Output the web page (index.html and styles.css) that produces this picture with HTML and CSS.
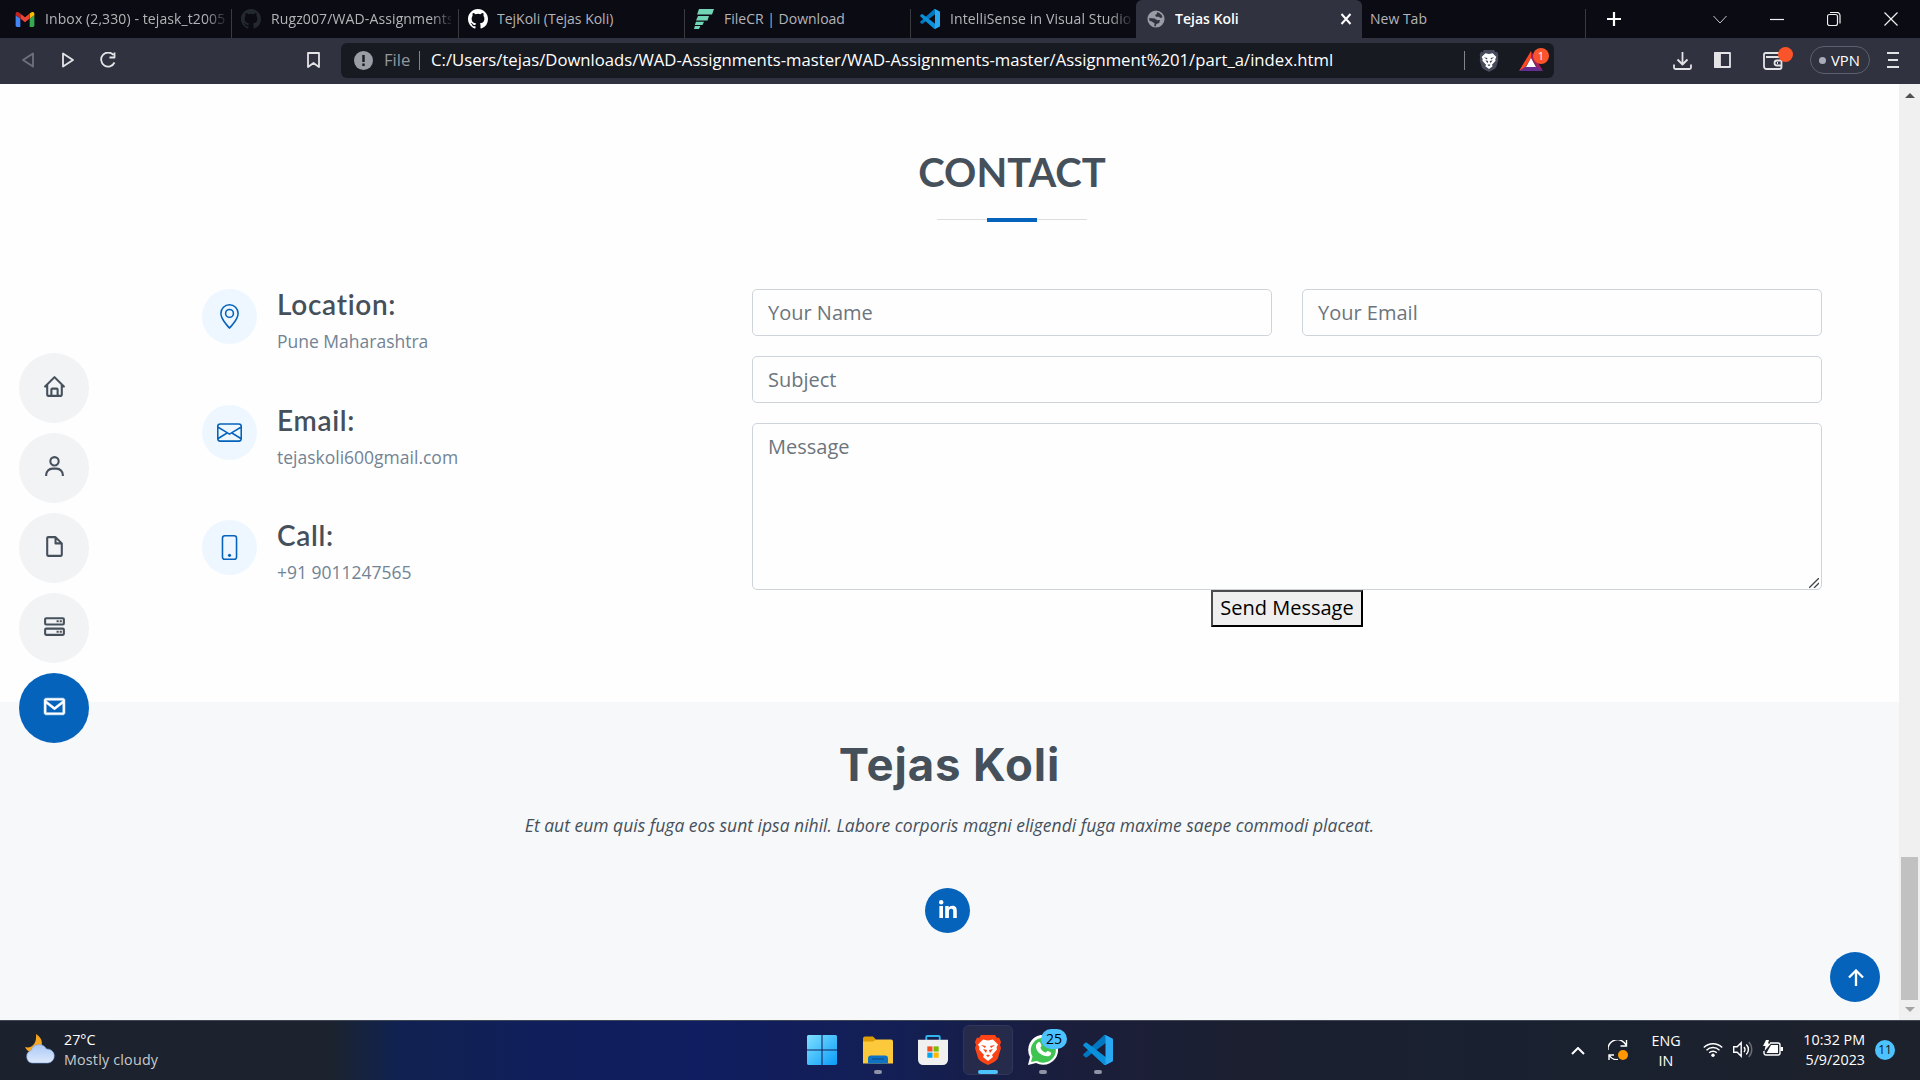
FILE: index.html
```html
<!DOCTYPE html>
<html lang="en">
<head>
<meta charset="utf-8">
<title>Tejas Koli</title>
<link rel="stylesheet" href="styles.css">
</head>
<body>
<svg class="defs" width="0" height="0">
  <symbol id="github" viewBox="0 0 16 16"><path d="M8 0C3.58 0 0 3.58 0 8c0 3.54 2.29 6.53 5.47 7.59.4.07.55-.17.55-.38 0-.19-.01-.82-.01-1.49-2.01.37-2.53-.49-2.69-.94-.09-.23-.48-.94-.82-1.13-.28-.15-.68-.52-.01-.53.63-.01 1.08.58 1.23.82.72 1.21 1.87.87 2.33.66.07-.52.28-.87.51-1.07-1.78-.2-3.64-.89-3.64-3.95 0-.87.31-1.59.82-2.15-.08-.2-.36-1.02.08-2.12 0 0 .67-.21 2.2.82a7.6 7.6 0 0 1 4 0c1.53-1.04 2.2-.82 2.2-.82.44 1.1.16 1.92.08 2.12.51.56.82 1.27.82 2.15 0 3.07-1.87 3.75-3.65 3.95.29.25.54.73.54 1.48 0 1.07-.01 1.93-.01 2.2 0 .21.15.46.55.38A8 8 0 0 0 16 8c0-4.42-3.58-8-8-8z"/></symbol>
  <symbol id="vscode" viewBox="0 0 100 100"><path fill="#0078c1" d="M96 11 76 1c-2-1-5-1-7 1L2 63c-2 2-2 4 0 6l6 5c1 1 3 1 5 0L92 14c3-2 8 0 8 3 0-3-1-5-4-6z"/><path fill="#0a91dc" d="M96 89 76 99c-2 1-5 1-7-1L2 37c-2-2-2-4 0-6l6-5c1-1 3-1 5 0l79 60c3 2 8 0 8-3 0 3-1 5-4 6z"/><path fill="#29a9f2" d="M76 99c-2 1-5 1-7-1 3 2 6 1 6-3V5c0-4-3-5-6-3 2-2 5-2 7-1l20 10c3 1 4 3 4 6v66c0 3-1 5-4 6z"/></symbol>
  <symbol id="lion" viewBox="0 0 26 30"><path d="M6 0h14l2 3 2-.5L26 7l-1 3 1 3-3 10c-1 3-6 5-10 7-4-2-9-4-10-7L0 13l1-3-1-3 2-4.500 2 .5z"/><path fill="#fff" fill-rule="evenodd" d="m8 4.500 5 1 5-1 5 5-1.500 3 .5 2-5 5.500 1 2-5 4-5-4 1-2-5-5.500.5-2L3 9.500zM6 10l4 3 1-2zm14 0-4 3-1-2zM8 14l3 4 1-3zm10 0-3 4-1-3zm-7 6.500 2 1.500 2-1.500-2-1z"/></symbol>
</svg>

<header class="browser">
  <div class="tabs">
    <div class="tab"><svg class="fav" viewBox="0 0 20 16"><path fill="#4285f4" d="M1.500 16H5V7L0 3.500v11A1.500 1.500 0 0 0 1.500 16z"/><path fill="#34a853" d="M15 16h3.500a1.500 1.500 0 0 0 1.500-1.500v-11L15 7z"/><path fill="#fbbc04" d="M15 1.500V7l5-3.500V2c0-2-2-2.600-3.500-1.500z"/><path fill="#ea4335" d="M5 7V1.500l5 4 5-4V7l-5 4z"/><path fill="#c5221f" d="M0 2v1.500L5 7V1.500L3.500.5C2-.6 0 0 0 2z"/></svg><span class="t1">Inbox (2,330) - tejask_t2005</span></div>
    <div class="tab"><svg class="fav dim"><use href="#github"/></svg><span class="t2">Rugz007/WAD-Assignments</span></div>
    <div class="tab"><svg class="fav white"><use href="#github"/></svg><span class="t3">TejKoli (Tejas Koli)</span></div>
    <div class="tab"><svg class="fav" viewBox="0 0 20 20"><g fill="#72d5b5"><path d="M5 0h15l-2 5.500H3z"/><path d="M4 7h11l-1.500 4.500H2z"/><path d="M2 12.800h8L8.500 16H.8z"/><path d="M.8 17h5.500L5 20H0z"/></g></svg><span class="t4">FileCR | Download</span></div>
    <div class="tab"><svg class="fav"><use href="#vscode"/></svg><span class="t5">IntelliSense in Visual Studio</span></div>
    <div class="tab active"><svg class="fav globe" viewBox="0 0 20 20"><circle cx="10" cy="10" r="9.500" fill="#9a9ca5"/><path fill="#30323f" d="M11 2.500c3 .5 5.500 2.500 6.300 5.500l-2.300 1-2-1.500h-3l-1-2 2-1zM2.500 9l6 .5 3 2 3-.5-1 3.500-3 1-1 2.700-1.500-.3.500-3-3-2L2.700 12z"/></svg><span class="t6">Tejas Koli</span><svg class="close" viewBox="0 0 12 12"><path d="m1.500 1 9 10m0-10-9 10" stroke="#fff" stroke-width="2"/></svg></div>
    <div class="tab newtab"><span class="t7">New Tab</span></div>
    <svg class="plus" viewBox="0 0 16 16"><path d="M8 1v14M1 8h14" stroke="#fff" stroke-width="2.200"/></svg>
    <div class="winctl">
      <svg viewBox="0 0 14 14"><path d="m.5 4 6.500 7 6.500-7"/></svg>
      <svg viewBox="0 0 14 14"><path d="M0 7.500h14"/></svg>
      <svg viewBox="0 0 14 14"><rect x=".5" y="2.500" width="10" height="11" rx="2"/><path d="M3 .5h7a3 3 0 0 1 3 3v8"/></svg>
      <svg viewBox="0 0 14 14"><path d="m.5.5 13 13m0-13-13 13"/></svg>
    </div>
  </div>
  <div class="toolbar">
    <svg class="tb back" viewBox="0 0 12 16"><path d="M11 1.500v13L1 8z"/></svg>
    <svg class="tb fwd" viewBox="0 0 12 16"><path d="M1 1.500v13L11 8z"/></svg>
    <svg class="tb reload" viewBox="0 0 16 16"><path d="M13.500 3A7 7 0 1 0 14.500 10.500M14.500.5v5h-5" /></svg>
    <svg class="tb mark" viewBox="0 0 13 16"><path d="M1 1h11v14l-5.500-4L1 15z"/></svg>
    <div class="url">
      <svg class="info" viewBox="0 0 19 19"><circle cx="9.500" cy="9.500" r="9.500" fill="#9a9da5"/><path d="M9.500 4v7m0 1.500V15" stroke="#171a21" stroke-width="2.400"/></svg>
      <span class="scheme">File</span><i></i>
      <span class="path">C:/Users/tejas/Downloads/WAD-Assignments-master/WAD-Assignments-master/Assignment%201/part_a/index.html</span>
      <i class="sep2"></i>
      <svg class="shield" viewBox="0 0 26 30" fill="#484a5c"><use href="#lion"/></svg>
      <div class="bat"><svg viewBox="0 0 24 20"><path fill="#ff4724" d="M12 0v7L6 17l-6 3z"/><path fill="#9e1f63" d="m12 0 12 20-6-3-6-10z"/><path fill="#662d91" d="M0 20h24l-6-4H6z"/><path fill="#fff" d="m12 7 5 9H7z"/></svg><b>1</b></div>
    </div>
    <svg class="tb dl" viewBox="0 0 19 18"><path d="M9.500 0v12M4.500 7.500l5 5 5-5M1 12.500v3A1.500 1.500 0 0 0 2.500 17h14a1.500 1.500 0 0 0 1.500-1.500v-3"/></svg>
    <svg class="tb side" viewBox="0 0 17 16"><rect x="1" y="1" width="15" height="14"/><path fill="#e4e4e8" d="M1 1h5v14H1z"/></svg>
    <div class="wallet"><svg class="tb" viewBox="0 0 20 18"><path d="M17 5V2.500A1.500 1.500 0 0 0 15.500 1h-13A1.500 1.500 0 0 0 1 2.500v12A2.500 2.500 0 0 0 3.500 17h13a2 2 0 0 0 2-2V7a2 2 0 0 0-2-2H3M18 8.500h-4a2.500 2.500 0 0 0 0 5h4M14 11h1"/></svg><b></b></div>
    <div class="vpn"><i></i><span>VPN</span></div>
    <svg class="tb menu" viewBox="0 0 12 16"><path d="M0 1h12M1 8h10M0 15h12"/></svg>
  </div>
</header>

<div class="viewport">
  <div class="page">
    <section class="contact">
      <h2>CONTACT</h2>
      <div class="rule"></div>
      <div class="cols">
        <div class="infos">
          <div class="item"><div class="ic"><svg viewBox="0 0 16 16"><path d="M12.166 8.940c-.524 1.062-1.234 2.120-1.960 3.070A32 32 0 0 1 8 14.580a32 32 0 0 1-2.206-2.570c-.726-.95-1.436-2.008-1.960-3.070C3.304 7.867 3 6.862 3 6a5 5 0 0 1 10 0c0 .862-.305 1.867-.834 2.940M8 16s6-5.686 6-10A6 6 0 0 0 2 6c0 4.314 6 10 6 10"/><path d="M8 8a2 2 0 1 1 0-4 2 2 0 0 1 0 4m0 1a3 3 0 1 0 0-6 3 3 0 0 0 0 6"/></svg></div><div><h4>Location:</h4><p>Pune Maharashtra</p></div></div>
          <div class="item"><div class="ic"><svg viewBox="0 0 16 16"><path d="M0 4a2 2 0 0 1 2-2h12a2 2 0 0 1 2 2v8a2 2 0 0 1-2 2H2a2 2 0 0 1-2-2zm2-1a1 1 0 0 0-1 1v.217l7 4.200 7-4.200V4a1 1 0 0 0-1-1zm13 2.383-4.708 2.825L15 11.105zm-.034 6.876-5.640-3.471L8 9.583l-1.326-.795-5.640 3.470A1 1 0 0 0 2 13h12a1 1 0 0 0 .966-.741M1 11.105l4.708-2.897L1 5.383z"/></svg></div><div><h4>Email:</h4><p>tejaskoli600gmail.com</p></div></div>
          <div class="item"><div class="ic"><svg viewBox="0 0 16 16"><path d="M11 1a1 1 0 0 1 1 1v12a1 1 0 0 1-1 1H5a1 1 0 0 1-1-1V2a1 1 0 0 1 1-1zM5 0a2 2 0 0 0-2 2v12a2 2 0 0 0 2 2h6a2 2 0 0 0 2-2V2a2 2 0 0 0-2-2z"/><path d="M8 14a1 1 0 1 0 0-2 1 1 0 0 0 0 2"/></svg></div><div><h4>Call:</h4><p>+91 9011247565</p></div></div>
        </div>
        <form class="form">
          <div class="row"><input placeholder="Your Name"><input placeholder="Your Email"></div>
          <input placeholder="Subject">
          <div class="area"><textarea placeholder="Message"></textarea><svg viewBox="0 0 10 10"><path d="M0 10 10 0M5 10l5-5"/></svg></div>
          <button type="button">Send Message</button>
        </form>
      </div>
    </section>
    <footer class="foot">
      <h3>Tejas Koli</h3>
      <p>Et aut eum quis fuga eos sunt ipsa nihil. Labore corporis magni eligendi fuga maxime saepe commodi placeat.</p>
      <a class="in"><svg viewBox="0 0 18 18"><circle cx="2.200" cy="2.200" r="2.200"/><path d="M.4 6H4v12H.4zM6.200 6h3.500v1.600C10.300 6.500 11.600 5.700 13.400 5.700c3.700 0 4.400 2.400 4.400 5.600V18h-3.600v-6c0-1.400 0-3.200-2-3.200s-2.300 1.500-2.300 3.100V18H6.200z"/></svg></a>
    </footer>
    <nav class="side-nav">
      <a><svg viewBox="0 0 24 24"><path d="M3 13h1v7c0 1.103.897 2 2 2h12c1.103 0 2-.897 2-2v-7h1a1 1 0 0 0 .707-1.707l-9-9a1 1 0 0 0-1.414 0l-9 9A1 1 0 0 0 3 13zm7 7v-5h4v5zm2-15.586 6 6V15l.001 5H16v-5c0-1.103-.897-2-2-2h-4c-1.103 0-2 .897-2 2v5H6v-9.586z"/></svg></a>
      <a><svg viewBox="0 0 24 24"><path d="M12 2a5 5 0 1 0 5 5 5 5 0 0 0-5-5zm0 8a3 3 0 1 1 3-3 3 3 0 0 1-3 3zm9 11v-1a7 7 0 0 0-7-7h-4a7 7 0 0 0-7 7v1h2v-1a5 5 0 0 1 5-5h4a5 5 0 0 1 5 5v1z"/></svg></a>
      <a><svg viewBox="0 0 24 24"><path d="M19.937 8.680c-.011-.032-.02-.063-.033-.094a.997.997 0 0 0-.196-.293l-6-6a.997.997 0 0 0-.293-.196c-.03-.014-.062-.022-.094-.033A.991.991 0 0 0 13 2H6c-1.103 0-2 .897-2 2v16c0 1.103.897 2 2 2h12c1.103 0 2-.897 2-2V9c0-.11-.03-.22-.063-.32zM16.586 8H14V5.414zM6 20V4h6v5a1 1 0 0 0 1 1h5l.002 10z"/></svg></a>
      <a><svg viewBox="0 0 24 24"><path d="M20 3H4a2 2 0 0 0-2 2v4a2 2 0 0 0 2 2h16a2 2 0 0 0 2-2V5a2 2 0 0 0-2-2zM4 9V5h16v4zm16 4H4a2 2 0 0 0-2 2v4a2 2 0 0 0 2 2h16a2 2 0 0 0 2-2v-4a2 2 0 0 0-2-2zM4 19v-4h16v4zM17 6h2v2h-2zm-3 0h2v2h-2zm3 10h2v2h-2zm-3 0h2v2h-2z"/></svg></a>
      <a class="on"><svg viewBox="0 0 24 24"><path d="M20 4H4c-1.103 0-2 .897-2 2v12c0 1.103.897 2 2 2h16c1.103 0 2-.897 2-2V6c0-1.103-.897-2-2-2zm0 2v.511l-8 6.223-8-6.222V6zM4 18V9.044l7.386 5.745a.994.994 0 0 0 1.228 0L20 9.044 20.002 18z"/></svg></a>
    </nav>
    <a class="top"><svg viewBox="0 0 16 17"><path d="M8 17V1.500M1 8.500l7-7 7 7"/></svg></a>
  </div>
  <div class="scroll"><svg class="up" viewBox="0 0 10 5"><path d="m0 5 5-5 5 5z"/></svg><div class="thumb"></div><svg class="down" viewBox="0 0 10 5"><path d="m0 0 5 5 5-5z"/></svg></div>
</div>

<footer class="taskbar">
  <div class="weather">
    <svg viewBox="0 0 30 30"><defs><linearGradient id="cl" x2="0" y2="1"><stop stop-color="#a9c8f5"/><stop offset="1" stop-color="#dde9fb"/></linearGradient></defs><path fill="#f5a623" d="M11 0c7 4 8 12 2 17-5 3-11 1-13-4 7 2 12-4 11-13z"/><path fill="url(#cl)" stroke="#7ea6e6" stroke-width=".6" d="M7 29a6.500 6.500 0 0 1-1-12.500 8.500 8.500 0 0 1 15.500-1.500A7 7 0 0 1 23 29z"/></svg>
    <div><span>27°C</span><span class="dimtxt">Mostly cloudy</span></div>
  </div>
  <div class="apps">
    <div class="app start"><svg viewBox="0 0 29 29"><defs><linearGradient id="wg" x2="1" y2="1"><stop stop-color="#7fe0ff"/><stop offset="1" stop-color="#0a9cf8"/></linearGradient></defs><path fill="url(#wg)" d="M1 0h13v14H0V1zM15 0h13l1 1v13H15zM0 15h14v14H1l-1-1zM15 15h14v13l-1 1H15z"/></svg></div>
    <div class="app run"><svg viewBox="0 0 30 29"><path fill="#dd9d07" d="M0 3a2 2 0 0 1 2-2h8l3 3v5H0z"/><path fill="#fcc83c" d="M0 6h10l3-2h15a2 2 0 0 1 2 2v22H0z"/><path fill="#0f72c4" d="M5 28v-5a3 3 0 0 1 3-3h14a3 3 0 0 1 3 3v5z"/><path stroke="#0a4a84" d="M9 23.500h12"/></svg></div>
    <div class="app"><svg viewBox="0 0 29 29"><path fill="none" stroke="#2fb4ec" stroke-width="1.800" d="M8 7V2a1 1 0 0 1 1-1h11a1 1 0 0 1 1 1v5"/><path fill="#f0f0f0" d="M0 4.500h29V24a5 5 0 0 1-5 5H5a5 5 0 0 1-5-5z"/><path fill="#f25022" d="M9 11h5v5H9z"/><path fill="#7fba00" d="M15 11h5v5h-5z"/><path fill="#00a4ef" d="M9 17h5v5H9z"/><path fill="#ffb900" d="M15 17h5v5h-5z"/></svg></div>
    <div class="app run sel"><svg viewBox="0 0 26 30" fill="#fb4316"><use href="#lion"/></svg></div>
    <div class="app run"><svg viewBox="0 0 30 30"><path fill="#fff" d="m0 30 2-8A15 15 0 1 1 8 28z"/><path fill="#3fc351" d="m3 27 1.500-5.500A12.500 12.500 0 1 1 9 26z"/><path fill="#fff" d="M10 7.500c1-.8 2-.5 2.500.5l1 2.500c.3 1-1.300 1.800-1 2.500 1 2 2.500 3.500 5 4.500.8.300 1.500-1.800 2.500-1.400l2.500 1.200c1 .5.700 1.700 0 2.700-3 4-15.500-1.500-14.500-9.500.2-1 .8-2 2-3z"/></svg><b>25</b></div>
    <div class="app run"><svg><use href="#vscode"/></svg></div>
  </div>
  <div class="tray">
    <svg class="chev" viewBox="0 0 14 8"><path d="m1 7 6-6 6 6"/></svg>
    <svg class="sync" viewBox="0 0 20 20"><path d="M0 10A9.500 9.500 0 0 1 18 5M18.500 0v6h-6M1 20v-5h5M1 15a9 9 0 0 0 9 4.500"/><circle cx="15" cy="15" r="5"/></svg>
    <div class="lang"><span>ENG</span><span>IN</span></div>
    <svg class="wifi" viewBox="0 0 20 15"><path d="M.8 5.500a13 13 0 0 1 18.400 0M3.500 8.200a9.200 9.200 0 0 1 13 0M6.200 10.800a5.400 5.400 0 0 1 7.600 0"/><circle cx="10" cy="13.200" r="1.700"/></svg>
    <svg class="snd" viewBox="0 0 20 17"><path d="M.7 5.700h3.500l4-4v13.600l-4-4H.7zM11 6a4 4 0 0 1 0 5M13.300 3.500a7 7 0 0 1 0 10"/><path opacity=".35" d="M15.800 1a11 11 0 0 1 0 15"/></svg>
    <svg class="bat2" viewBox="0 0 20 17"><path d="M7 3h8a2 2 0 0 1 2 2v8a2 2 0 0 1-2 2H3a2 2 0 0 1-2-2v-2"/><path fill="#fff" stroke="none" d="M8 5h7v8H3.500zM17.500 7H20v4h-2.500zM3 0h3L5 3.500h3L1.500 11l1-5H0z"/></svg>
    <div class="clock"><span class="time">10:32 PM</span><span class="date">5/9/2023</span></div>
    <b class="count">11</b>
  </div>
</footer>
</body>
</html>
```
FILE: styles.css
```css
* { box-sizing: border-box; }
body { margin: 0; width: 1920px; height: 1080px; overflow: hidden; display: flex; flex-direction: column; font-family: "Open Sans", "Noto Sans", sans-serif; background: #fefefe; }
svg { display: block; flex: none; }
h2, h3, h4, p { margin: 0; white-space: nowrap; }
.defs { position: absolute; }

/* Browser chrome */
.browser { height: 84px; flex: none; color: #fff; }
.tabs { height: 38px; background: #0b0b14; display: flex; padding-left: 6px; }
.tab { width: 226px; height: 38px; flex: none; display: flex; align-items: center; padding-left: 9px; color: #b4b4b8; font-size: 14px; white-space: nowrap; background: linear-gradient(#3a3a3f, #3a3a3f) right bottom / 1px 29px no-repeat; }
.tab:nth-child(2) { width: 227px; }
.tab:nth-child(5) { width: 225px; background: none; }
.tab span { overflow: hidden; width: 182px; margin-left: 10px; line-height: 22px; }
.tab .t3 { margin-left: 9px; }
.fav { width: 20px; height: 20px; }
.tab:first-child .fav { height: 15px; }
.dim { fill: #24292f; }
.white { fill: #fff; }
.t1 { letter-spacing: .1px; }
.t2, .t5 { letter-spacing: .12px; }
.t1, .t2, .t5 { -webkit-mask-image: linear-gradient(90deg, #000 160px, transparent 184px); mask-image: linear-gradient(90deg, #000 160px, transparent 184px); }
.tab .t2 { width: 180px; }
.tab.active { background: #30323f; border-radius: 6px 6px 0 0; color: #fff; font-weight: 600; padding-left: 11px; }
.tab.active .fav { width: 18px; height: 18px; }
.tab.active span { width: 166px; }
.close { width: 12px; height: 12px; margin-left: -1px; }
.newtab { padding-left: 0; width: 224px; }
.newtab span { margin-left: 8px; }
.plus { width: 16px; height: 16px; margin: 11px 0 0 20px; }
.winctl { display: flex; align-items: center; gap: 43px; margin-left: 91px; }
.winctl svg { width: 14px; height: 14px; fill: none; stroke: #f0f0f0; stroke-width: 1.2; }
.winctl svg:first-child { stroke-width: 1; stroke: #c8c8c8; }
.toolbar { height: 46px; background: #30323f; display: flex; align-items: center; padding: 0 21px 0 22px; }
.tb { fill: none; stroke: #e4e4e8; stroke-width: 1.800; stroke-linejoin: round; height: 16px; margin-bottom: 2px; }
.back { width: 12px; opacity: .35; }
.fwd { width: 12px; margin-left: 28px; }
.reload { width: 16px; margin-left: 26px; }
.mark { width: 13px; margin-left: 191px; }
.url { width: 1213px; height: 35px; margin: 0 119px 1px 21px; flex: none; background: #171a21; border-radius: 6px; display: flex; align-items: center; padding-left: 13px; font-size: 16.700px; line-height: 22px; white-space: nowrap; }
.url span { margin-bottom: 1px; }
.url i { width: 1px; height: 19px; background: #82848a; margin: 0 11px 0 9px; }
.info { width: 19px; height: 19px; }
.scheme { color: #94979f; margin-left: 11px; width: 26px; }
.path { width: 904px; }
.url .sep2 { margin: 0 14px 0 129px; }
.shield { width: 20px; height: 22px; }
.bat { position: relative; margin-left: 20px; }
.bat svg { width: 24px; height: 20px; }
.bat b { position: absolute; left: 14px; top: -3px; width: 16px; height: 16px; border-radius: 8px; background: #fb542b; font: 11px/16px "Open Sans", sans-serif; text-align: center; }
.dl { width: 19px; height: 18px; margin-bottom: 0; }
.side { width: 17px; margin-left: 22px; }
.wallet { position: relative; margin-left: 32px; }
.wallet svg { width: 20px; height: 18px; margin: 0; }
.wallet b { position: absolute; left: 15px; top: -5px; width: 15px; height: 15px; border-radius: 50%; background: #fb542b; }
.vpn { width: 60px; height: 28px; margin: 0 0 2px 27px; border: 1.500px solid #5d6070; border-radius: 14px; display: flex; align-items: center; gap: 5px; padding-left: 8px; font-size: 14.800px; }
.vpn i { width: 7px; height: 7px; border-radius: 50%; background: #aaabb8; }
.menu { width: 12px; margin-left: auto; }

/* Web page */
.viewport { height: 936px; flex: none; display: flex; }
.page { width: 1899px; position: relative; color: #45505b; }
.contact { height: 618px; padding: 64px 77px 0 202px; }
h2 { text-align: center; font: 700 40px/48px Lato, sans-serif; }
.rule { width: 150px; height: 4px; margin: 22px auto 67px; background: linear-gradient(#0563bb, #0563bb) center / 50px 4px no-repeat, linear-gradient(#ddd, #ddd) 0 1px / 100% 1px no-repeat; }
.cols { display: grid; grid-template-columns: 550px 1070px; }
.item { display: flex; gap: 20px; height: 115.500px; }
.ic { width: 55px; height: 55px; border-radius: 50%; background: #eef7ff; display: flex; align-items: center; justify-content: center; }
.ic svg { width: 25px; height: 25px; fill: #0563bb; }
h4 { font: 600 28px/31px Lato, sans-serif; letter-spacing: .7px; }
.item p { font-size: 17.500px; line-height: 26px; margin-top: 8px; color: #728394; }
.form { display: flex; flex-direction: column; }
.row { display: flex; gap: 30px; }
input, textarea { display: block; width: 100%; height: 47px; border: 1px solid #ced4da; border-radius: 5px; padding: 7px 15px; font: 20px/30px "Open Sans", sans-serif; background: #fefefe; margin: 0 0 20px; outline: 0; }
::placeholder { color: #6c757d; opacity: 1; }
textarea { height: 167px; margin: 0; padding-top: 8px; resize: none; }
.area { position: relative; }
.area svg { position: absolute; right: 3px; bottom: 2px; width: 10px; height: 10px; stroke: #444; stroke-width: 1.300; }
button { align-self: center; width: 152px; height: 37px; border: 2px solid; border-color: #4c4c4c #000 #000 #4c4c4c; background: #efefef; color: #000; font: 20px/30px "Open Sans", sans-serif; padding: 0 0 2px; white-space: nowrap; }
.foot { height: 318px; background: #f7f8fa; display: flex; flex-direction: column; align-items: center; padding-top: 36px; }
h3 { font: 700 45.500px/54px Inter, sans-serif; letter-spacing: .9px; }
.foot p { font-size: 17.500px; font-style: italic; line-height: 26px; margin-top: 20px; }
.in { width: 45px; height: 45px; border-radius: 50%; background: #0563bb; display: flex; align-items: center; justify-content: center; margin: 50px 5px 0 0; padding: 0 0 3px 1px; }
.in svg { width: 18px; height: 18px; fill: #fff; }
.side-nav { position: absolute; left: 19px; top: 269px; display: flex; flex-direction: column; gap: 10px; }
.side-nav a { width: 70px; height: 70px; border-radius: 50%; background: #f2f3f5; display: flex; align-items: center; justify-content: center; padding: 0 0 3px; }
.side-nav svg { width: 25px; height: 25px; fill: #45505b; }
.side-nav .on { background: #0563bb; }
.side-nav .on svg { fill: #fff; stroke: #fff; stroke-width: .5; }
.top { position: absolute; right: 19px; bottom: 18px; width: 50px; height: 50px; border-radius: 50%; background: #0563bb; display: flex; align-items: center; justify-content: center; padding-left: 1px; }
.top svg { width: 16px; height: 17px; fill: none; stroke: #fff; stroke-width: 2.300; }
.scroll { width: 21px; background: #f0f0f0; display: flex; flex-direction: column; align-items: center; padding: 9px 0 8px; }
.scroll svg { width: 10px; height: 5px; fill: #505050; }
.scroll .down { fill: #a3a3a3; margin-top: 7px; }
.thumb { width: 17px; height: 143px; background: #c1c1c1; margin-top: auto; }

/* Taskbar */
.taskbar { height: 60px; flex: none; border-top: 1px solid #414855; background: linear-gradient(90deg, #1c222d 0, #1c232e 330px, #102250 395px, #101e5c 560px, #101d60 700px, #131f54 900px, #1b1e3a 1080px, #1b1f30 1250px, #192130 1500px, #1d212b 1920px); color: #fff; display: grid; grid-template-columns: 798px 1fr 349px; font-size: 14.300px; line-height: 20px; }
.taskbar span { display: block; white-space: nowrap; }
.weather { display: flex; padding: 9px 0 0 25px; gap: 9px; }
.weather svg { width: 30px; height: 30px; margin-top: 4px; }
.dimtxt { color: #c8cace; letter-spacing: .2px; }
.apps { display: flex; gap: 5px; padding-top: 4px; }
.app { width: 50px; height: 50px; position: relative; display: flex; align-items: center; justify-content: center; border-radius: 6px; }
.app svg { width: 30px; height: 30px; }
.app.start { padding-right: 2px; }
.app.run::after { content: ""; position: absolute; left: 21px; bottom: 1px; width: 8px; height: 4px; border-radius: 2px; background: #8f93a5; }
.app.sel { background: #262b4c; border: 1px solid #30355a; }
.app.sel::after { left: 14px; bottom: 0; width: 20px; background: #4cc2ff; }
.app.sel svg { width: 26px; }
.app b { position: absolute; left: 23px; top: 4px; width: 26px; height: 20px; border-radius: 10px; background: #4cc2ff; color: #000; font: 14px/20px "Open Sans", sans-serif; text-align: center; }
.tray { display: flex; align-items: center; }
.tray svg { fill: none; stroke: #fff; stroke-width: 1.400; }
.chev { width: 14px; height: 8px; }
.tray .chev { stroke-width: 2; }
.sync { width: 20px; height: 20px; margin: -1px 0 0 23px; }
.sync circle { fill: #ff9800; stroke: none; }
.lang { width: 40px; margin-left: 18px; text-align: center; }
.wifi { width: 20px; height: 15px; margin: -2px 0 0 17px; }
.wifi circle { fill: #fff; stroke: none; }
.snd { width: 20px; height: 17px; margin: -2px 0 0 10px; }
.bat2 { width: 20px; height: 17px; margin: -4px 0 0 10px; }
.clock { width: 82px; margin-top: -1px; text-align: right; }
.count { width: 20px; height: 20px; margin: -1px 0 0 10px; border-radius: 50%; background: #4cc2ff; color: #111; font: 12px/20px "Open Sans", sans-serif; text-align: center; }
```
